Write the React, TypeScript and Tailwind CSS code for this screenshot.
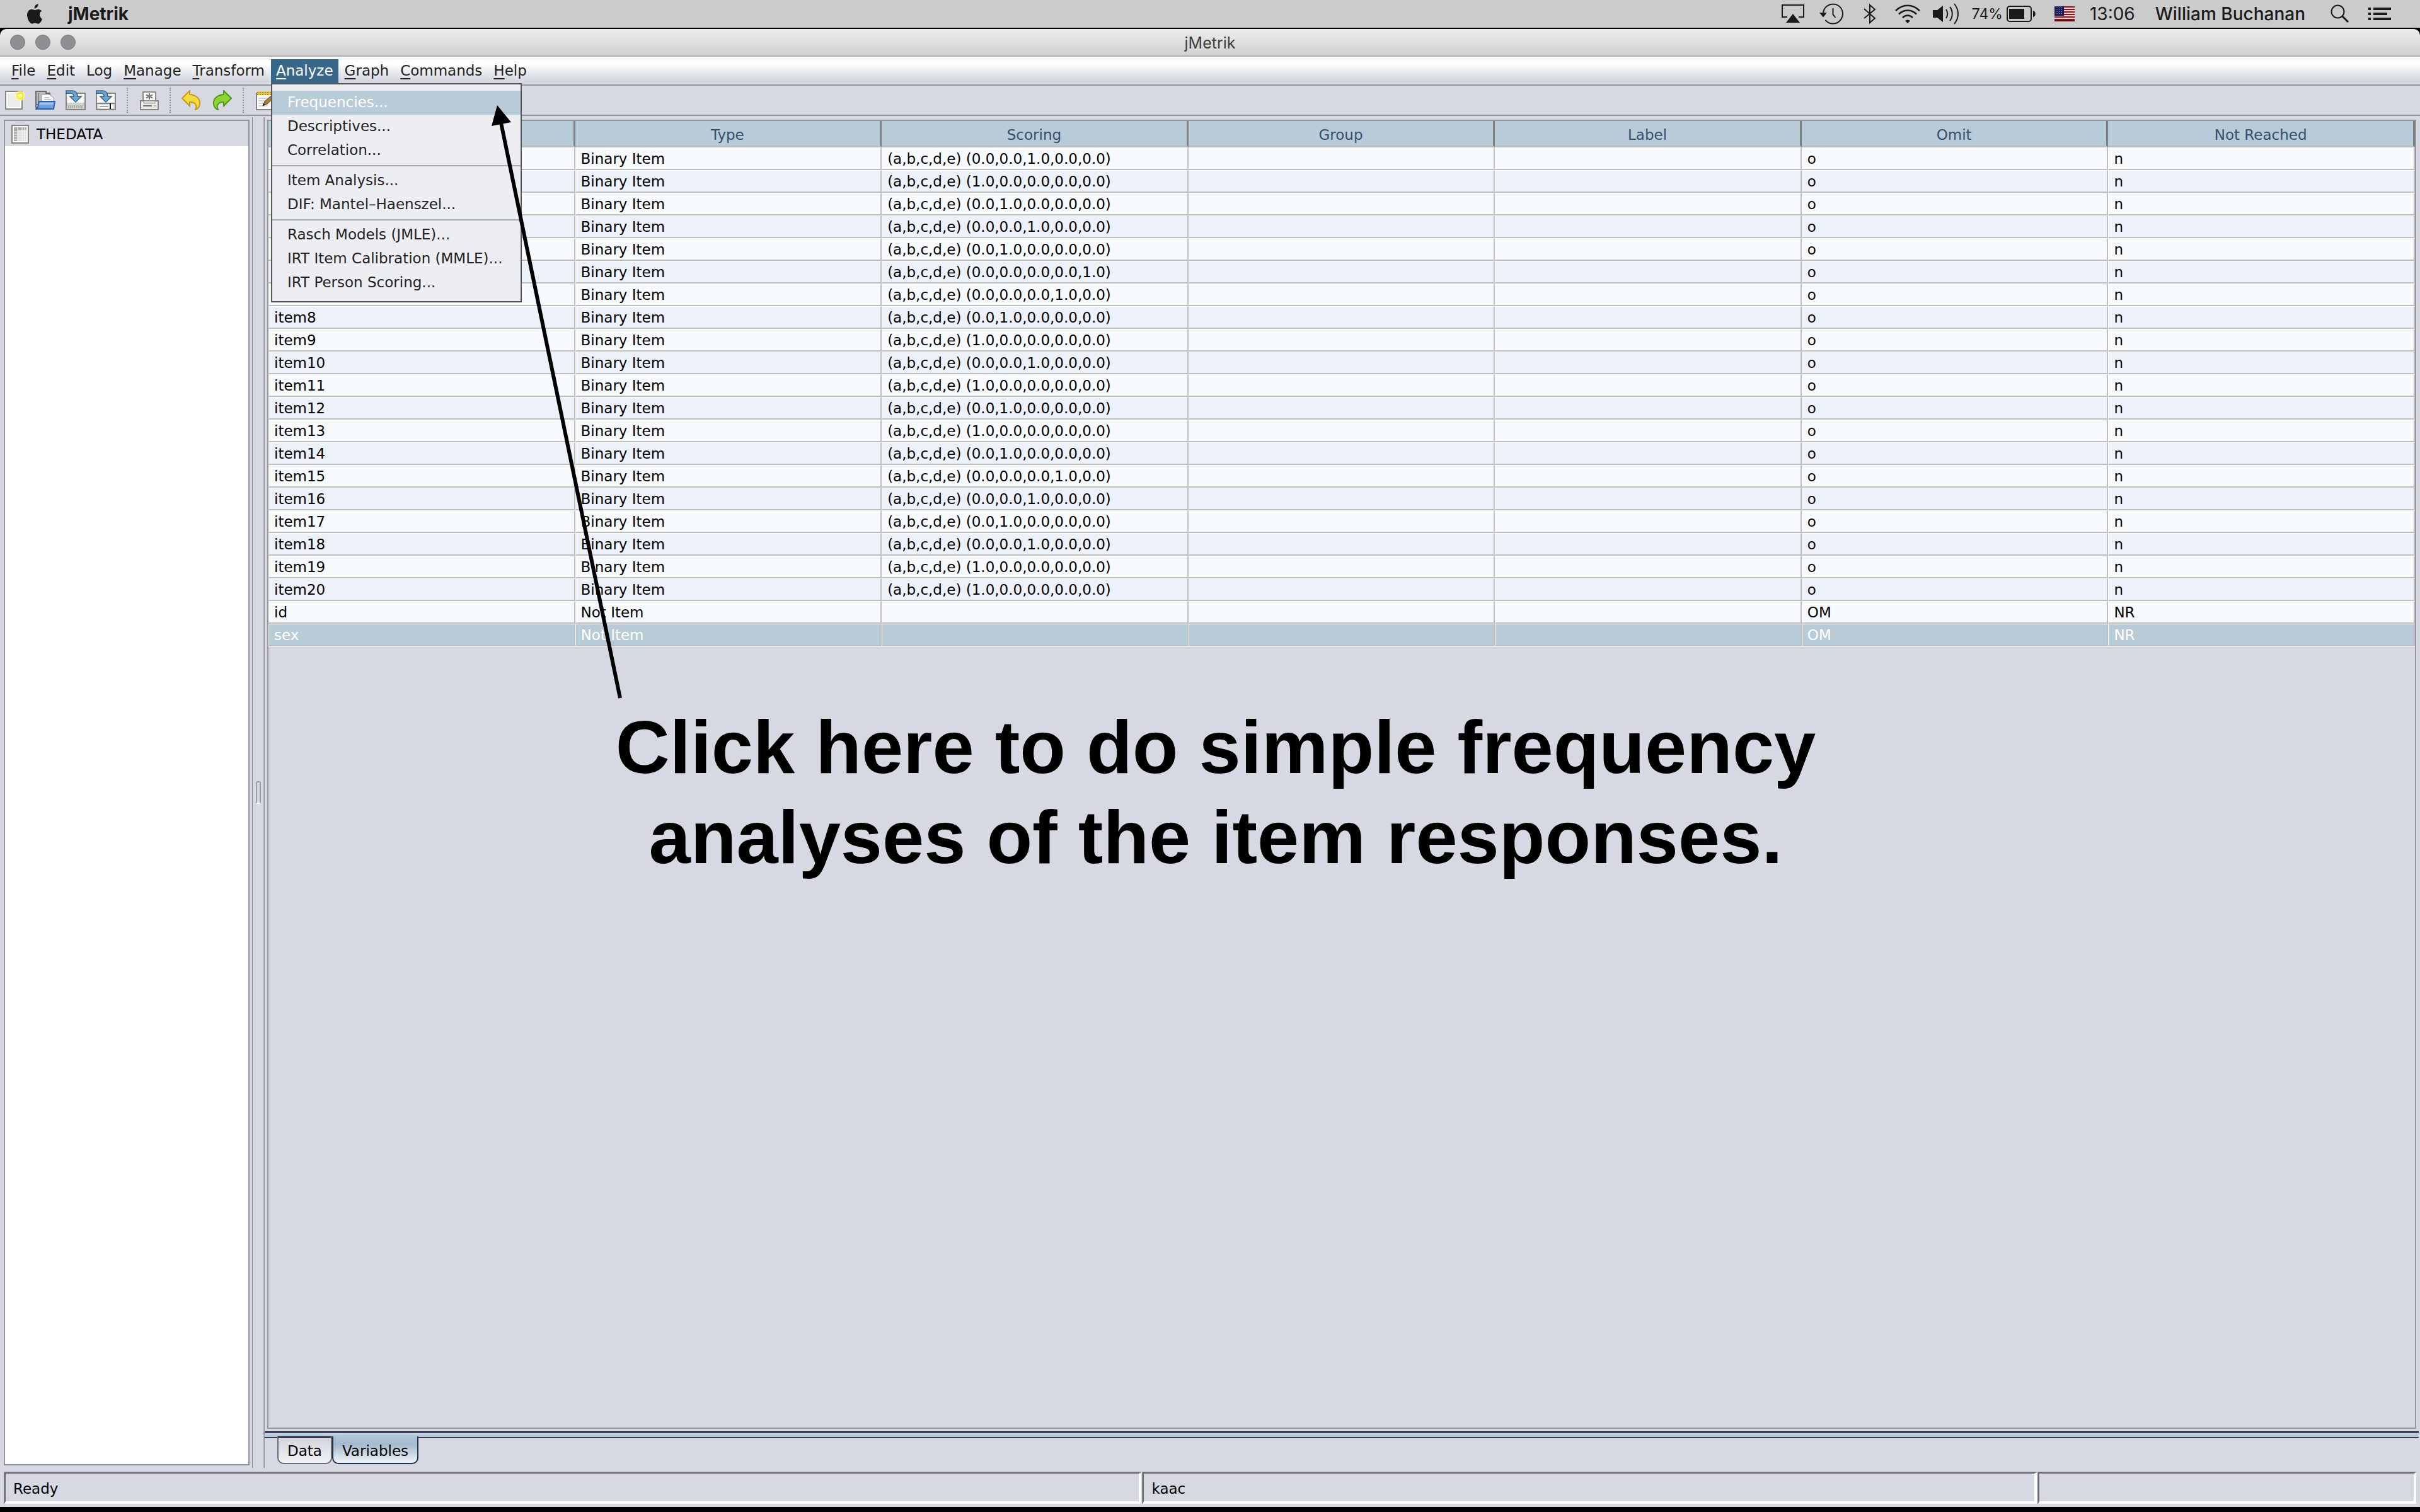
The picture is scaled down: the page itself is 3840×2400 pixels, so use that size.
import React from "react";

const menus: [string, boolean][] = [
  ["File", true],
  ["Edit", true],
  ["Log", false],
  ["Manage", true],
  ["Transform", true],
  ["Analyze", true],
  ["Graph", true],
  ["Commands", true],
  ["Help", true],
];

const analyzeGroups = [
  ["Frequencies...", "Descriptives...", "Correlation..."],
  ["Item Analysis...", "DIF: Mantel–Haenszel..."],
  ["Rasch Models (JMLE)...", "IRT Item Calibration (MMLE)...", "IRT Person Scoring..."],
];

const headers = ["Variable", "Type", "Scoring", "Group", "Label", "Omit", "Not Reached"];

/* position of the keyed answer (0 = a … 4 = e) for item1 … item20 */
const keys = [2, 0, 1, 2, 1, 4, 3, 1, 0, 2, 0, 1, 0, 1, 3, 2, 1, 2, 0, 0];

const rows = [
  ...keys.map((k, i) => [
    `item${i + 1}`,
    "Binary Item",
    `(a,b,c,d,e) (${[0, 1, 2, 3, 4].map((n) => (n === k ? "1.0" : "0.0")).join(",")})`,
    "",
    "",
    "o",
    "n",
  ]),
  ["id", "Not Item", "", "", "", "OM", "NR"],
  ["sex", "Not Item", "", "", "", "OM", "NR"],
];

function AppleLogo() {
  return (
    <svg viewBox="0 0 26 32" className="h-8 w-[26px]" fill="#1a1a1a">
      <path d="M18.6 0.2c.2 2-.6 3.700-1.700 5-1.100 1.300-2.700 2.200-4.300 2.100-.2-1.900.7-3.700 1.700-4.900C15.500 1.100 17.200.3 18.600.2z" />
      <path d="M25 24.500c-.7 1.600-1 2.300-1.900 3.700-1.200 1.900-2.900 3.500-4.800 3.500-1.800 0-2.300-1.100-4.700-1.100s-2.900 1.100-4.700 1.100c-2 0-3.500-1.800-4.700-3.600C1 23-.1 16.200 2.400 12.300c1.400-2.200 3.500-3.500 5.800-3.500 2.200 0 3.600 1.200 5.400 1.200 1.700 0 2.800-1.200 5.300-1.200 1.900 0 3.900 1 5.300 2.800-4.700 2.600-3.900 9.300.8 12.900z" />
    </svg>
  );
}

function AirPlayIcon() {
  return (
    <svg viewBox="0 0 36 30" className="h-[30px] w-9" fill="none">
      <path d="M9 20H1V1h34v19h-8" stroke="#1a1a1a" strokeWidth="2" />
      <path d="M18 15l11 14H7z" fill="#1a1a1a" />
    </svg>
  );
}

function TimeMachineIcon() {
  return (
    <svg viewBox="0 0 38 34" className="h-[34px] w-[38px]" fill="none" stroke="#1a1a1a" strokeWidth="2">
      <path d="M6 17a15.500 15.500 0 1 1 3.500 9.800" />
      <path d="M21.500 8v10l4 5" />
      <path d="M0 15h12L6 22.500z" fill="#1a1a1a" stroke="none" />
    </svg>
  );
}

function BluetoothIcon() {
  return (
    <svg viewBox="0 0 20 34" className="h-[34px] w-5" fill="none" stroke="#1a1a1a" strokeWidth="2">
      <path d="M1 9l17 15-8 7V3l8 7L1 24" />
    </svg>
  );
}

function WifiIcon() {
  return (
    <svg viewBox="0 0 40 30" className="h-[30px] w-10" fill="none" stroke="#1a1a1a" strokeWidth="2.600">
      <path d="M1 10c11-11 27-11 38 0M6 15.500c8-8 20-8 28 0M12 21c5-4.500 11-4.500 16 0" />
      <path d="M16 26c2.500-2 5.500-2 8 0l-4 4z" fill="#1a1a1a" stroke="none" />
    </svg>
  );
}

function VolumeIcon() {
  return (
    <svg viewBox="0 0 42 34" className="h-[34px] w-[42px]" fill="none" stroke="#1a1a1a" strokeWidth="2">
      <path d="M0 11h7l9-7v26l-9-7H0z" fill="#1a1a1a" stroke="none" />
      <path d="M21 10c3 4 3 10 0 14M27 6c5 6 5 16 0 22M34 1c8 10 8 22 0 32" />
    </svg>
  );
}

function BatteryIcon() {
  return (
    <svg viewBox="0 0 46 26" className="h-[26px] w-[46px]" fill="none">
      <rect x="1" y="1" width="38" height="24" rx="4" stroke="#1a1a1a" strokeWidth="2" />
      <rect x="4" y="5" width="24" height="16" fill="#1a1a1a" />
      <path d="M42 8c5 1 5 9 0 10z" fill="#1a1a1a" />
    </svg>
  );
}

function FlagIcon() {
  return (
    <svg viewBox="0 0 32 24" className="h-6 w-8">
      <rect width="32" height="24" fill="#d4d4d4" />
      {[0, 4, 8, 12, 16, 20].map((y) => (
        <rect key={y} y={y} width="32" height="2" fill="#8c1018" />
      ))}
      <rect y="22" width="32" height="2" fill="#5c1018" />
      <rect width="15" height="15" fill="#1c1a5c" />
      {[2, 5, 8, 11].map((y) =>
        [2, 5, 8, 11].map((x) => <rect key={`${x}-${y}`} x={x} y={y} width="1" height="1" fill="#cfcfe6" />),
      )}
    </svg>
  );
}

function SearchIcon() {
  return (
    <svg viewBox="0 0 30 30" className="h-[30px] w-[30px]" fill="none" stroke="#1a1a1a">
      <circle cx="11.500" cy="11.500" r="10" strokeWidth="2" />
      <path d="M18.500 18.500l9.500 9.500" strokeWidth="3" />
    </svg>
  );
}

function ListIcon() {
  return (
    <svg viewBox="0 0 36 20" className="h-5 w-9" fill="#1a1a1a">
      <path d="M0 0h4v4H0zM8 0h28v4H8zM0 8h4v4H0zM8 8h22v4H8zM0 16h4v4H0zM8 16h28v4H8z" />
    </svg>
  );
}

function NewIcon() {
  return (
    <svg viewBox="0 0 32 32" className="size-8">
      <rect x="1" y="2" width="26" height="28" fill="#eeeeee" stroke="#85857f" strokeWidth="2" />
      <rect x="3" y="4" width="22" height="24" fill="none" stroke="#ffffff" strokeWidth="2" />
      <circle cx="24" cy="9" r="8" fill="#fdf6a0" opacity="0.7" />
      <circle cx="24" cy="9" r="6" fill="#f8ee2c" />
      <circle cx="24" cy="9" r="3" fill="#ffffb8" />
    </svg>
  );
}

function OpenIcon() {
  return (
    <svg viewBox="0 0 32 32" className="size-8">
      <path d="M1 28V2h16v3h6v18H1z" fill="#b9b9b6" stroke="#6d6d69" strokeWidth="2" />
      <path d="M4 5h2v22H4z" fill="#8a8a86" />
      <path d="M10 7h12l7 5v8H10z" fill="#fbfbfb" stroke="#9a9a96" />
      <path d="M14 12h8M14 15h11" stroke="#b5b5b5" strokeWidth="1.500" />
      <path d="M1 30h28l2-12H6L4 27z" fill="#6f9fdc" stroke="#2c5fae" strokeWidth="2" />
      <path d="M7 20h22v3H6z" fill="#a5c4ec" />
    </svg>
  );
}

function SaveIcon({ as = false }: { as?: boolean }) {
  return (
    <svg viewBox="0 0 32 32" className="size-8">
      <rect x="1" y="5" width="30" height="26" fill="#f6f6f6" stroke="#85857f" strokeWidth="2" />
      <path d="M2 20h28v10H2z" fill="#d2d2d0" />
      {as ? (
        <>
          <path d="M2 21h28" stroke="#85857f" strokeWidth="2" />
          <path d="M4 23h24v6H4z" fill="#fafafa" />
          <path d="M6 25h14v2H6z" fill="#a4a4a2" />
          <path d="M22 21h2v9h-2z" fill="#111111" />
        </>
      ) : (
        <path d="M5 24v5M8 24v5M11 24v5M14 24v5M17 24v5M20 24v5M23 24v5M26 24v5" stroke="#a6a6a4" strokeWidth="1.500" />
      )}
      <path d="M1 1h9c6 0 9 4 9 9h6l-9 9-9-9h6c0-3-1-5-5-5H1z" fill="#6ea6cf" stroke="#2f648f" strokeWidth="1.500" />
    </svg>
  );
}

function PrintIcon() {
  return (
    <svg viewBox="0 0 32 32" className="size-8">
      <path d="M7 17V3h20v14" fill="#f8f8f8" stroke="#8b8b87" strokeWidth="2" />
      <path d="M17 5v10M12 7.500l10 5M22 7.500l-10 5" stroke="#7d7d7a" strokeWidth="2" />
      <path d="M3 17h28v14H3z" fill="#ececea" stroke="#85857f" strokeWidth="2" />
      <path d="M8 17h18v4H8z" fill="#dedede" stroke="#9a9a98" />
      <path d="M7 25h14" stroke="#70706d" strokeWidth="2" />
      <path d="M24 25h4" stroke="#b5b5b2" strokeWidth="2" />
    </svg>
  );
}

function TurnArrow({ redo = false }: { redo?: boolean }) {
  return (
    <svg viewBox="0 0 32 32" className="size-8">
      {redo ? (
        <path
          d="M31 13L19 1v6C8 8 2 14 3 22c0 4 3 8 7 9-3-6-1-12 9-12v6z"
          fill="#8fd532"
          stroke="#4c9a18"
          strokeWidth="2"
        />
      ) : (
        <path
          d="M1 13L13 1v6c11 1 17 7 16 15 0 4-3 8-7 9 3-6 1-12-9-12v6z"
          fill="#f2dc3c"
          stroke="#c39a1c"
          strokeWidth="2"
        />
      )}
    </svg>
  );
}

function NotepadIcon() {
  return (
    <svg viewBox="0 0 32 32" className="size-8">
      <rect x="3" y="5" width="26" height="26" fill="#fafafa" stroke="#85857f" strokeWidth="2" />
      <path d="M6 13h18M6 17h18M6 21h14M6 25h14" stroke="#c8c8c8" strokeWidth="1.500" />
      <path d="M4 2h26v6H4z" fill="#e8c63c" />
      <path d="M4 4h26M4 7h26" stroke="#b8901c" strokeWidth="2" strokeDasharray="2 2" />
      <path d="M30 6L16 18l-3 7 7-3 12-11z" fill="#b27a3a" stroke="#5d3c14" />
      <path d="M13 25l1-4 3 2z" fill="#111111" />
    </svg>
  );
}

function TableIcon() {
  return (
    <svg viewBox="0 0 28 30" className="h-[30px] w-7">
      <rect x="1" y="1" width="26" height="28" fill="#ffffff" stroke="#85857f" strokeWidth="2" />
      <rect x="4" y="4" width="20" height="22" fill="#dcdcdc" />
      <rect x="4" y="4" width="6" height="22" fill="#a9a9a9" />
      <rect x="4" y="4" width="20" height="4" fill="#a9a9a9" />
      <path d="M10 4v22M17 4v22M21 4v22" stroke="#ffffff" />
      <path d="M4 11h20M4 15h20M4 19h20M4 23h20" stroke="#f4f4f4" />
    </svg>
  );
}

function ToolSeparator() {
  return <div className="mx-px h-10 w-0 border-l-2 border-dotted border-[#8e919f]" />;
}

function ToolButton({ label, children }: { label: string; children: React.ReactNode }) {
  return (
    <button type="button" aria-label={label} className="flex size-8 shrink-0 items-center justify-center">
      {children}
    </button>
  );
}

function MacBar() {
  return (
    <header className="flex h-[46px] shrink-0 items-center border-b-2 border-black bg-[#cbcbcb] pr-[46px] pl-[42px] font-[Inter] text-[#1a1a1a]">
      <AppleLogo />
      <span className="ml-10 text-[28px] font-bold">jMetrik</span>
      <div className="ml-auto flex items-center">
        <AirPlayIcon />
        <div className="ml-6"><TimeMachineIcon /></div>
        <div className="ml-8"><BluetoothIcon /></div>
        <div className="ml-[30px]"><WifiIcon /></div>
        <div className="ml-5"><VolumeIcon /></div>
        <span className="ml-5 text-[23px]">74%</span>
        <div className="ml-[6px]"><BatteryIcon /></div>
        <div className="ml-[30px]"><FlagIcon /></div>
        <span className="ml-6 text-[28px]">13:06</span>
        <span className="ml-8 text-[28px] font-medium">William Buchanan</span>
        <div className="ml-10"><SearchIcon /></div>
        <div className="ml-[30px]"><ListIcon /></div>
      </div>
    </header>
  );
}

function TitleBar() {
  return (
    <div className="grid h-11 shrink-0 grid-cols-[1fr_auto_1fr] items-center rounded-t-[10px] border-b-2 border-[#b3b0b3] bg-linear-to-b from-[#ececec] to-[#d1d1d1] px-4">
      <div className="flex gap-4">
        {["Close", "Minimize", "Zoom"].map((n) => (
          <button key={n} type="button" aria-label={n} className="size-6 rounded-full border border-[#77767b] bg-[#8f8e93]" />
        ))}
      </div>
      <h1 className="pt-[2px] font-[Inter] text-[25px] text-[#404040]">jMetrik</h1>
    </div>
  );
}

function AnalyzeMenu() {
  return (
    <div
      role="menu"
      className="absolute top-full left-0 z-20 w-[398px] border-2 border-[#555555] bg-[#edeef2] py-[10px] text-[#222222]"
    >
      {analyzeGroups.map((group, g) => (
        <div key={g} className={g > 0 ? "mt-1 border-t-2 border-[#a3a9b3] pt-1" : ""}>
          {group.map((item, i) => (
            <button
              key={item}
              type="button"
              role="menuitem"
              className={
                g === 0 && i === 0
                  ? "block h-[38px] w-full bg-[#b8cbd9] pb-[2px] pl-6 text-left whitespace-nowrap text-white"
                  : "block h-[38px] w-full pb-[2px] pl-6 text-left whitespace-nowrap"
              }
            >
              {item}
            </button>
          ))}
        </div>
      ))}
    </div>
  );
}

function MenuBar() {
  return (
    <nav className="flex h-[46px] shrink-0 items-end gap-[2px] border-b-2 border-[#9395a1] bg-linear-to-b from-[#f6f8f9] via-white via-25% to-[#d6d9e1] to-85% pb-[2px] pl-[10px] text-[#222222]">
      {menus.map(([name, keyed]) => {
        const open = name === "Analyze";
        return (
          <div key={name} className="relative">
            <button
              type="button"
              className={open ? "block h-[38px] bg-[#37688a] px-2 pb-[2px] text-white" : "block h-[38px] px-2 pb-[2px]"}
            >
              <span className={keyed ? "underline decoration-2 underline-offset-4" : ""}>{name[0]}</span>
              {name.slice(1)}
            </button>
            {open && <AnalyzeMenu />}
          </div>
        );
      })}
    </nav>
  );
}

function ToolBar() {
  return (
    <div className="flex h-12 shrink-0 items-center gap-4 border-b-2 border-[#9395a1] pl-2">
      <ToolButton label="New"><NewIcon /></ToolButton>
      <ToolButton label="Open"><OpenIcon /></ToolButton>
      <ToolButton label="Save"><SaveIcon /></ToolButton>
      <ToolButton label="Save as"><SaveIcon as /></ToolButton>
      <ToolSeparator />
      <ToolButton label="Print"><PrintIcon /></ToolButton>
      <ToolSeparator />
      <ToolButton label="Undo"><TurnArrow /></ToolButton>
      <ToolButton label="Redo"><TurnArrow redo /></ToolButton>
      <ToolSeparator />
      <ToolButton label="Edit"><NotepadIcon /></ToolButton>
    </div>
  );
}

function VariableTable() {
  return (
    <table className="w-full table-fixed border-separate border-spacing-0 border-b border-white">
      <thead>
        <tr className="h-[42px] bg-[#b8cbd9] text-[#34506b]">
          {headers.map((h) => (
            <th
              key={h}
              className="border-r-[3px] border-b-[3px] border-r-[#808080] border-b-[#bebebe] p-0 pt-1 text-center leading-8 font-normal"
            >
              {h}
            </th>
          ))}
        </tr>
      </thead>
      <tbody>
        {rows.map((row, r) => {
          const selected = r === rows.length - 1;
          const tone = selected
            ? "h-9 bg-[#b8cbd9] text-white"
            : r % 2 === 0
              ? "h-9 bg-[#f6fafd]"
              : "h-9 bg-[#edf1f9]";
          return (
            <tr key={row[0]} className={tone}>
              {row.map((cell, c) => (
                <td
                  key={c}
                  className="border-t border-r-2 border-b-2 border-l border-t-white border-r-[#bebebe] border-b-[#bebebe] border-l-white p-0 pl-2 leading-8 whitespace-nowrap"
                >
                  {cell}
                </td>
              ))}
            </tr>
          );
        })}
      </tbody>
    </table>
  );
}

function Tabs() {
  return (
    <div className="mr-[2px] h-16 shrink-0">
      <div className="h-[10px] border-t-2 border-b border-[#000018] bg-linear-to-b from-[#c3d5e8] to-[#aec6da]" />
      <div role="tablist" className="-mt-[2px] flex pl-5 text-black">
        <button
          type="button"
          role="tab"
          aria-selected="false"
          className="h-11 rounded-b-[10px] border-2 border-[#6b6c72] border-t-[#000018] bg-linear-to-b from-[#d4d6dc] to-[#f2f2f4] px-[14px] pt-[2px]"
        >
          Data
        </button>
        <button
          type="button"
          role="tab"
          aria-selected="true"
          className="h-11 rounded-b-[10px] border-2 border-t-0 border-[#1d3550] bg-linear-to-b from-[#aec3d8] via-[#a5bbd0] via-30% to-[#eef3f7] px-[14px] pt-1"
        >
          Variables
        </button>
      </div>
    </div>
  );
}

function StatusField({ children }: { children?: React.ReactNode }) {
  return (
    <div className="border-t border-l border-[#92929c]">
      <div className="flex h-[50px] items-center border-t-2 border-r-4 border-b-4 border-l-2 border-t-[#66676e] border-r-white border-b-white border-l-[#66676e] pt-1 pl-3">
        {children}
      </div>
    </div>
  );
}

function Callout() {
  return (
    <div className="pointer-events-none absolute inset-x-0 top-0 z-30">
      <svg viewBox="0 0 1000 1114" className="h-[1114px] w-[1000px]">
        <path d="M795 195L984 1108" stroke="#000000" strokeWidth="6" />
        <path d="M789 167L780 200L811 194z" fill="#000000" />
      </svg>
      <p className="pl-[18px] text-center font-['Liberation_Sans',sans-serif] text-[119px] leading-[143px] font-bold text-black">
        Click here to do simple frequency
        <br />
        analyses of the item responses.
      </p>
    </div>
  );
}

export default function App() {
  return (
    <div className="relative flex min-h-screen flex-col bg-black font-['DejaVu_Sans',sans-serif] text-[23px] leading-8">
      <MacBar />
      <TitleBar />
      <div className="flex grow flex-col bg-[#d6d9e1] pb-[5px]">
        <MenuBar />
        <ToolBar />
        <div className="flex grow">
          <aside className="my-[6px] mb-[10px] ml-[6px] w-[390px] shrink-0 border-2 border-[#9395a1] bg-white text-black">
            <a href="#thedata" className="flex h-10 items-center gap-3 bg-[#d6d9e1] pt-[2px] pl-[10px]">
              <TableIcon />
              THEDATA
            </a>
          </aside>
          <div className="mt-[2px] mb-[6px] ml-1 flex w-5 shrink-0 border-x-2 border-[#9395a1]">
            <div className="flex grow items-center justify-center border-x border-[#eef0f3]">
              <div className="h-9 w-2 rounded-[3px] border-2 border-[#9b9fab] border-b-white bg-[#d6d9e1]" />
            </div>
          </div>
          <main className="flex min-w-0 grow flex-col pt-[6px] text-black">
            <div className="mr-[6px] mb-1 ml-1 grow border-2 border-[#9395a1]">
              <VariableTable />
            </div>
            <Tabs />
          </main>
        </div>
        <footer className="mr-[6px] ml-[6px] grid grid-cols-[1805fr_1419fr_601fr] gap-px text-black">
          <StatusField>Ready</StatusField>
          <StatusField>kaac</StatusField>
          <StatusField />
        </footer>
      </div>
      <div className="h-2 shrink-0 bg-black" />
      <Callout />
    </div>
  );
}
